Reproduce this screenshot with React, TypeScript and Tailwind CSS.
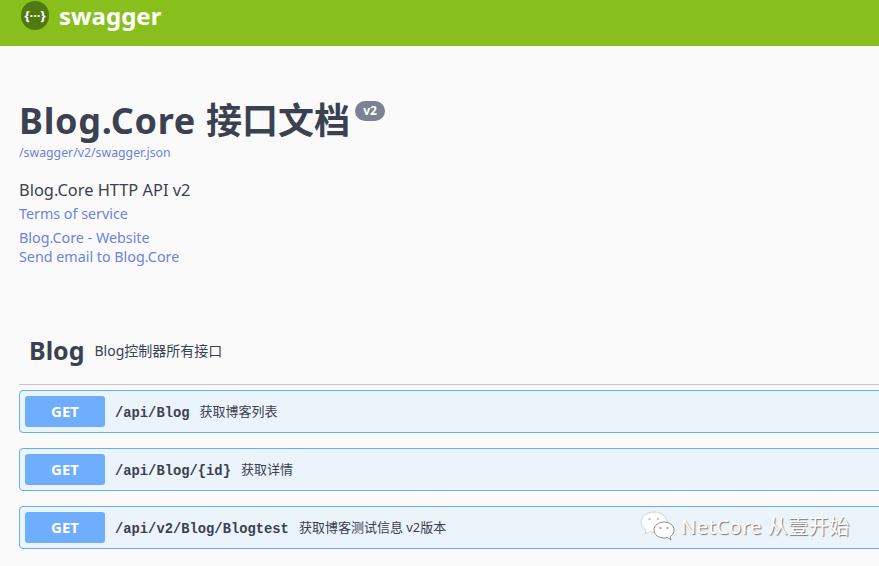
import React from 'react';

const SANS = 'font-["Noto_Sans","Noto_Sans_CJK_SC",sans-serif]';

interface Operation {
  path: string;
  summary: string;
}

const OPERATIONS: Operation[] = [
  { path: '/api/Blog', summary: '获取博客列表' },
  { path: '/api/Blog/{id}', summary: '获取详情' },
  { path: '/api/v2/Blog/Blogtest', summary: '获取博客测试信息 v2版本' },
];

const OperationRow: React.FC<Operation> = ({ path, summary }) => (
  <div className="flex h-[43px] w-[880px] shrink-0 items-center rounded-[4px] border border-[#61affe] bg-[#ebf3fb] pl-[5px]">
    <span className="flex h-[31px] w-[80px] items-center justify-center rounded-[3px] bg-[#6fadff] text-[15px] leading-none font-bold text-white">
      GET
    </span>
    <span className='mt-[5px] ml-[10px] font-["Liberation_Mono","Noto_Sans_CJK_SC",monospace] text-[13.8px] font-bold text-[#3b4151]'>
      {path}
    </span>
    <span className="ml-[10px] text-[13px] text-[#3b4151]">{summary}</span>
  </div>
);

const WeChatMark = () => (
  <svg width="36" height="32" viewBox="0 0 36 32" className="shrink-0">
    <path
      d="M14 1C7 1 1 5.500 1 11c0 3.200 2 6 5 8l-1 4 4.500-2.500c1.200.3 2.800.5 4.500.5 7 0 13-4.500 13-10S21 1 14 1z"
      fill="#fff"
      stroke="#d4d4d4"
    />
    <path
      d="M24 11c-5.500 0-10 3.500-10 8s4.500 8 10 8c1.200 0 2.300-.2 3.400-.5L31 29l-.8-3.400c2.400-1.500 3.800-3.900 3.800-6.600 0-4.500-4.500-8-10-8z"
      fill="#fff"
      stroke="#8c8c8c"
    />
    <circle cx="9.500" cy="8" r="1.300" fill="#c8c8c8" />
    <circle cx="18" cy="8" r="1.300" fill="#c8c8c8" />
    <circle cx="20.500" cy="17" r="1.100" fill="#999" />
    <circle cx="27.500" cy="17" r="1.100" fill="#999" />
  </svg>
);

export default function App() {
  return (
    <div className={`relative h-[566px] w-[879px] overflow-hidden bg-[#fafafa] ${SANS}`}>
      {/* Top bar */}
      <header className="flex h-[46px] items-start gap-[10px] bg-[#89bf1c] pt-px pl-[21px]">
        <div className="flex h-[29px] w-[28px] items-center justify-center rounded-full bg-[#4f7a12] text-[13px] leading-none font-bold text-white">
          {'{···}'}
        </div>
        <span className="text-[24px] leading-[30px] font-bold text-white">swagger</span>
      </header>

      {/* Info */}
      <section className="pt-[50px] pl-[19px]">
        <div className="flex items-start">
          <h1 className="text-[36px] leading-[50px] font-bold text-[#3b4151]">
            <span className="tracking-[0.7px]">Blog.Core </span>接口文档
          </h1>
          <span className="mt-[5px] ml-[5px] flex h-[20px] w-[30px] items-center justify-center rounded-[10px] bg-[#7d8293] text-[12px] font-bold text-white">
            v2
          </span>
        </div>
        <a className="-mt-[1px] block text-[12.300px] leading-[16px] text-[#6c83e0]">/swagger/v2/swagger.json</a>
        <p className="mt-[17px] text-[16.400px] leading-[24px] text-[#3b4151]">Blog.Core HTTP API v2</p>
        <a className="block text-[14.300px] leading-[24px] text-[#6c83e0]">Terms of service</a>
        <a className="block text-[14.300px] leading-[24px] text-[#6c83e0]">Blog.Core - Website</a>
        <a className="-mt-[5px] block text-[14.300px] leading-[24px] text-[#6c83e0]">Send email to Blog.Core</a>
      </section>

      {/* Tag */}
      <section className="mt-[56px] pl-[19px]">
        <div className="flex h-[60px] items-center gap-[10px] border-b border-[#c4c6cc] pb-[8px] pl-[10px]">
          <h2 className="text-[25px] font-bold text-[#3b4151]">Blog</h2>
          <span className="text-[14px] text-[#3b4151]">Blog控制器所有接口</span>
        </div>
        <div className="mt-[5px] flex flex-col gap-[15px]">
          {OPERATIONS.map((op) => (
            <OperationRow key={op.path} {...op} />
          ))}
        </div>
      </section>

      {/* Watermark */}
      <div className="absolute top-[511px] left-[640px] flex items-center gap-[5px]">
        <WeChatMark />
        <span className="text-[20px] leading-none tracking-[0.5px] text-white [text-shadow:1px_1px_1px_#777]">
          NetCore 从壹开始
        </span>
      </div>
    </div>
  );
}
